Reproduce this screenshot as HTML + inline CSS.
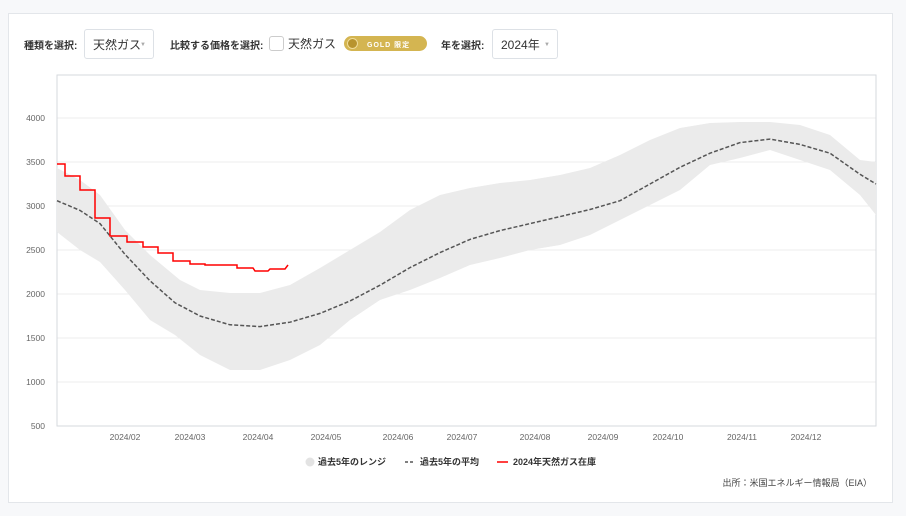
<!DOCTYPE html>
<html><head><meta charset="utf-8"><style>
*{margin:0;padding:0;box-sizing:border-box}
body{width:906px;height:516px;background:#f7f8fa;font-family:"Liberation Sans","Noto Sans CJK JP",sans-serif;position:relative;overflow:hidden}
.card{position:absolute;left:8px;top:13px;width:885px;height:490px;background:#fff;border:1px solid #e3e6ea}
.lbl{position:absolute;font-size:10px;font-weight:bold;color:#333;top:37px;white-space:nowrap}
.sel{position:absolute;top:29px;height:30px;border:1px solid #dde1e6;border-radius:3px;font-size:12px;color:#333;padding:6px 0 0 8px;white-space:nowrap}
.sel .ar{position:absolute;right:7px;top:12px;font-size:6px;color:#aaa}
</style></head><body>
<div class="card"></div>
<div class="lbl" style="left:24px">種類を選択:</div>
<div class="sel" style="left:84px;width:70px">天然ガス<span class="ar">▼</span></div>
<div class="lbl" style="left:170px">比較する価格を選択:</div>
<div style="position:absolute;left:269px;top:36px;width:15px;height:15px;border:1px solid #ccc;border-radius:3px"></div>
<div style="position:absolute;left:288px;top:35px;font-size:12px;color:#333;white-space:nowrap">天然ガス</div>
<div style="position:absolute;left:344px;top:36px;width:83px;height:15px;border-radius:8px;background:#d4b551;color:#fff;font-size:7px;font-weight:bold;padding:4px 0 0 23px;letter-spacing:1px;white-space:nowrap">GOLD 限定</div>
<div style="position:absolute;left:347px;top:38px;width:11px;height:11px;border-radius:50%;background:#b8942e;border:1px solid #f0dc9a"></div>
<div class="lbl" style="left:441px">年を選択:</div>
<div class="sel" style="left:492px;width:66px">2024年<span class="ar">▼</span></div>
<svg style="position:absolute;left:0;top:0" width="906" height="516">
<g stroke="#ececec" stroke-width="1">
<line x1="57" y1="118" x2="876" y2="118"/><line x1="57" y1="162" x2="876" y2="162"/><line x1="57" y1="206" x2="876" y2="206"/><line x1="57" y1="250" x2="876" y2="250"/><line x1="57" y1="294" x2="876" y2="294"/><line x1="57" y1="338" x2="876" y2="338"/><line x1="57" y1="382" x2="876" y2="382"/>
</g>
<rect x="57" y="75" width="819" height="351" fill="none" stroke="#d6d9de"/>
<g font-size="8.5" fill="#666" text-anchor="end">
<text x="45" y="121">4000</text><text x="45" y="165">3500</text><text x="45" y="209">3000</text><text x="45" y="253">2500</text><text x="45" y="297">2000</text><text x="45" y="341">1500</text><text x="45" y="385">1000</text><text x="45" y="429">500</text>
</g>
<g font-size="8.5" fill="#666" text-anchor="middle">
<text x="125" y="440">2024/02</text><text x="190" y="440">2024/03</text><text x="258" y="440">2024/04</text><text x="326" y="440">2024/05</text><text x="398" y="440">2024/06</text><text x="462" y="440">2024/07</text><text x="535" y="440">2024/08</text><text x="603" y="440">2024/09</text><text x="668" y="440">2024/10</text><text x="742" y="440">2024/11</text><text x="806" y="440">2024/12</text>
</g>
<polygon fill="#ebebeb" points="57,168 80,180 100,195 125,230 150,255 180,280 200,290 230,293 260,293 290,285 320,268 350,250 380,232 410,210 440,195 470,188 500,183 530,180 560,175 590,168 620,155 650,140 680,128 710,123 740,122 770,122 800,125 830,135 860,160 876,162 876,215 860,195 830,170 800,160 770,150 740,158 710,165 680,190 650,205 620,220 590,235 560,245 530,250 500,258 470,265 440,278 410,290 380,300 350,320 320,345 290,360 260,370 230,370 200,355 175,335 150,320 125,290 100,262 80,250 57,232"/>
<polyline fill="none" stroke="#555" stroke-width="1.5" stroke-dasharray="4,2" points="57,200.7 80,210.4 100,223.6 125,254.4 150,280.8 175,302.8 200,316 230,324.8 260,326.6 290,322.2 320,313.4 350,301 380,285.2 410,267.6 440,252.6 470,239.4 500,230.6 530,223.6 560,216.6 590,209.5 620,200.7 650,184 680,167.3 710,153.2 740,142.6 770,139.1 800,144.4 830,153.2 860,174.3 876,184"/>
<polyline fill="none" stroke="#f00" stroke-width="1.5" points="57,164 65,164 65,176 80,176 80,190 95,190 95,218 110,218 110,236 127,236 127,242 143,242 143,247 158,247 158,253 173,253 173,261 190,261 190,264 205,264 205,265 237,265 237,268 253,268 255,271 268,271 270,269 285,269 288,265"/>
<circle cx="310" cy="462" r="4.5" fill="#e3e3e3"/>
<line x1="405" y1="462" x2="414" y2="462" stroke="#555" stroke-width="1.5" stroke-dasharray="3,2"/>
<line x1="497" y1="462" x2="508" y2="462" stroke="#f00" stroke-width="1.5"/>
<g font-size="9" fill="#333" font-weight="bold">
<text x="318" y="465">過去5年のレンジ</text><text x="420" y="465">過去5年の平均</text><text x="513" y="465">2024年天然ガス在庫</text>
</g>
<text x="872" y="486" font-size="9" fill="#444" text-anchor="end">出所：米国エネルギー情報局（EIA）</text>
</svg>
</body></html>
